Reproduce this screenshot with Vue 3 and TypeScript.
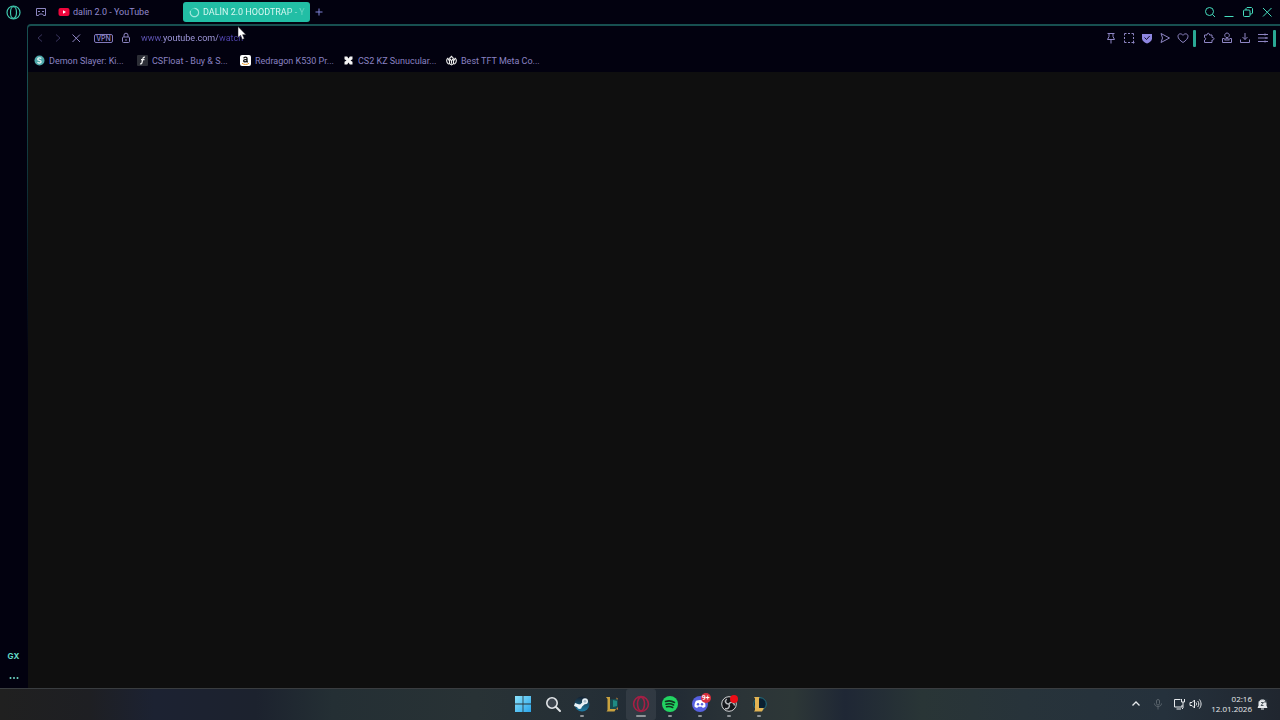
<script setup lang="ts">
import { ref } from 'vue'

interface Bookmark {
  id: string
  label: string
}

const bookmarks: Bookmark[] = [
  { id: 'slayer', label: 'Demon Slayer: Ki...' },
  { id: 'float', label: 'CSFloat - Buy & S...' },
  { id: 'amazon', label: 'Redragon K530 Pr...' },
  { id: 'kz', label: 'CS2 KZ Sunucular...' },
  { id: 'tft', label: 'Best TFT Meta Co...' },
]

interface Tool {
  name: string
  path: string
  bar?: boolean
  solid?: boolean
}

const tools: Tool[] = [
  { name: 'Pin', path: 'M2.500 1.500h7M4 1.500v3L2.500 7.500h7L8 4.500v-3M6 7.500v4' },
  { name: 'Snapshot', path: 'M1.500 3.500v-2h2M5 1.500h2M8.500 1.500h2v2M10.500 5v2M1.500 5v2M1.500 8.500v2h2M5 10.500h2M8.500 10.500h3M10.500 8.500v3' },
  { name: 'Ad blocker', path: 'M1 2h10v4.500C11 9 8.500 10.500 6 11.500 3.500 10.500 1 9 1 6.500z', solid: true },
  { name: 'Flow', path: 'M2 1.500L10.500 6 2 10.500 3.500 6z' },
  { name: 'Favourites', path: 'M6 10.500C3 8.500 1 6.500 1 4.300 1 1.500 4.500 1 6 3.300 7.500 1 11 1.500 11 4.300 11 6.500 9 8.500 6 10.500z', bar: true },
  { name: 'Extensions', path: 'M1.500 3h2.500c-.5-2.300 3-2.300 2.500 0H9v2.500c2.600-.5 2.600 3 0 2.500v2.500H1.500V8c1.600 0 1.600-2.500 0-2.500z' },
  { name: 'Profile', path: 'M6 1a2.300 2.300 0 1 0 .1 0M3.500 6.500h-2v4h9v-4h-2M3.500 8c1-2 4-2 5 0z' },
  { name: 'Downloads', path: 'M6 1v6.500M3.500 5L6 7.500 8.500 5M1.500 7.500v3h9v-3' },
  { name: 'Easy setup', path: 'M1 2.500h10M1 6h10M1 9.500h10M8 1.500v2M9 5v2M8 8.500v2', bar: true },
]

interface TaskItem {
  id: string
  label: string
  running: boolean
  active?: boolean
  badge?: string
}

const tasks: TaskItem[] = [
  { id: 'start', label: 'Start', running: false },
  { id: 'search', label: 'Search', running: false },
  { id: 'steam', label: 'Steam', running: true },
  { id: 'riot', label: 'League client', running: false },
  { id: 'opera', label: 'Opera GX', running: true, active: true },
  { id: 'spotify', label: 'Spotify', running: true },
  { id: 'discord', label: 'Discord', running: true, badge: '9+' },
  { id: 'obs', label: 'OBS Studio', running: true },
  { id: 'league', label: 'League of Legends', running: true },
]

const address = ref('www.youtube.com/watch')
</script>

<template>
  <div class="desktop">
    <div class="browser">
      <aside class="sidebar">
        <button class="opera" aria-label="Opera menu">
          <svg width="15" height="15" viewBox="0 0 15 15" fill="none" stroke="#3fc9ae">
            <circle cx="7.500" cy="7.500" r="6.500" stroke-width="1.200" />
            <ellipse cx="7.500" cy="7.500" rx="3" ry="5.800" stroke-width="1.200" />
          </svg>
        </button>
        <button class="gx">GX</button>
        <button class="more" aria-label="More">
          <svg width="10" height="4" viewBox="0 0 10 4" fill="#6fd9c8">
            <circle cx="1.500" cy="2" r="1" /><circle cx="5" cy="2" r="1" /><circle cx="8.500" cy="2" r="1" />
          </svg>
        </button>
      </aside>

      <div class="window">
        <header class="tabs">
          <button class="island" aria-label="Tab islands">
            <svg width="12" height="10" viewBox="0 0 12 10" fill="none" stroke="#8c86c0">
              <path d="M1.500 1.500h9v7H8.500L7.500 7h-3l-1 1.500h-2z" /><path d="M3 4.500h2M7 4.500h2" />
            </svg>
          </button>
          <button class="tab">
            <svg width="12" height="10" viewBox="0 0 12 10">
              <rect x="0.500" y="1" width="11" height="8" rx="2" fill="#f0063c" /><path d="M5 3.200v3.600L8 5z" fill="#fff" />
            </svg>
            <span>dalin 2.0 - YouTube</span>
          </button>
          <button class="tab current">
            <svg width="11" height="11" viewBox="0 0 11 11" fill="none">
              <circle cx="5.500" cy="5.500" r="4.200" stroke="#4fd2bc" />
              <path d="M5.500 1.300A4.200 4.200 0 1 1 1.500 4" stroke="#a0e8dc" stroke-width="1.200" />
            </svg>
            <span>DALİN 2.0 HOODTRAP - Y</span>
          </button>
          <button class="plus" aria-label="New tab">
            <svg width="8" height="8" viewBox="0 0 8 8" stroke="#7f83d8"><path d="M4 .5v7M.5 4h7" /></svg>
          </button>
          <div class="controls">
            <button aria-label="Search tabs">
              <svg width="12" height="12" viewBox="0 0 12 12"><circle cx="5.500" cy="5.500" r="4" /><path d="M8.500 8.500l2.500 2.500" /></svg>
            </button>
            <button aria-label="Minimize">
              <svg width="12" height="12" viewBox="0 0 12 12"><path d="M1.500 10.500h9" /></svg>
            </button>
            <button aria-label="Restore">
              <svg width="12" height="12" viewBox="0 0 12 12"><rect x="1.500" y="4" width="6.500" height="6.500" rx="1" /><path d="M4 4V2.500l1-1h4.500l1 1V7l-1 1H8" /></svg>
            </button>
            <button aria-label="Close">
              <svg width="12" height="12" viewBox="0 0 12 12"><path d="M2 2l8.500 8.500M10.500 2L2 10.500" /></svg>
            </button>
          </div>
        </header>

        <section class="panel">
          <div class="toolbar">
            <button class="nav dim" aria-label="Back">
              <svg width="12" height="12" viewBox="0 0 12 12"><path d="M8 2.500L4 6l4 3.500" /></svg>
            </button>
            <button class="nav dim" aria-label="Forward">
              <svg width="12" height="12" viewBox="0 0 12 12"><path d="M4 2.500L8 6 4 9.500" /></svg>
            </button>
            <button class="nav" aria-label="Stop loading">
              <svg width="12" height="12" viewBox="0 0 12 12"><path d="M2.500 2.500l7.500 7.500M10 2.500L2.500 10" /></svg>
            </button>
            <button class="vpn">VPN</button>
            <button class="lock" aria-label="Site information">
              <svg width="10" height="12" viewBox="0 0 10 12"><rect x="1.500" y="5" width="7" height="5.500" rx="1" /><path d="M3 5V3.200a2 2 0 0 1 4 0V5M5 7v2" /></svg>
            </button>
            <input v-model="address" class="address" type="text" aria-label="Address" spellcheck="false" />
            <div class="tools">
              <template v-for="tool in tools" :key="tool.name">
                <button :aria-label="tool.name">
                  <svg width="12" height="12" viewBox="0 0 12 12" :class="{ solid: tool.solid }">
                    <path :d="tool.path" />
                    <path v-if="tool.solid" class="tick" d="M3.500 5.500l2 2L8.700 4" />
                  </svg>
                </button>
                <i v-if="tool.bar" class="bar"></i>
              </template>
            </div>
          </div>

          <nav class="bookmarks">
            <a v-for="mark in bookmarks" :key="mark.id" href="#">
              <svg v-if="mark.id === 'slayer'" width="11" height="11" viewBox="0 0 11 11">
                <circle cx="5.500" cy="5.500" r="5" fill="#4fa9ac" />
                <path d="M7.300 3.500C6 2.300 3.500 2.800 3.800 4.300 4 5.700 7 5 7.100 6.700 7.100 8.300 4.600 8.400 3.500 7.300" fill="none" stroke="#e8f6f6" stroke-width="1.300" />
              </svg>
              <svg v-else-if="mark.id === 'float'" width="11" height="11" viewBox="0 0 11 11">
                <rect width="11" height="11" rx="1" fill="#2c2e36" />
                <path d="M8 2.300C6.500 1.800 6 3 5.700 4.500L5 7.500C4.700 8.700 4 9 3 8.700M4 4.700h3.500" fill="none" stroke="#f2f2f2" stroke-width="1.200" />
              </svg>
              <svg v-else-if="mark.id === 'amazon'" width="11" height="11" viewBox="0 0 11 11">
                <rect width="11" height="11" rx="2" fill="#fff" />
                <path d="M3.700 3.300C4 1.600 7 1.600 7 3.300v3.200l.6.800M7 4.300C4.500 4.200 3.500 4.900 3.700 6 4 7.400 6.300 7 7 5.700" fill="none" stroke="#111" stroke-width="1.300" />
                <path d="M2 8.300c2 1.600 5 1.600 7 0" fill="none" stroke="#f0a030" />
              </svg>
              <svg v-else-if="mark.id === 'kz'" width="11" height="11" viewBox="0 0 11 11">
                <path d="M1.500 1.500h2.700l1.300 2 1.300-2h2.700v2.700l-2 1.300 2 1.300v2.700H6.800l-1.300-2-1.300 2H1.500V6.800l2-1.300-2-1.300z" fill="#f4f4f4" />
              </svg>
              <svg v-else width="11" height="11" viewBox="0 0 12 11">
                <path d="M3 9.500C0 8 .3 4 2 3l2 3.500M9 9.500C12 8 11.700 4 10 3L8 6.500M4 3l2-2 2 2-2 3zM3.800 4v5L6 10.300 8.200 9V4M6 6v3" fill="none" stroke="#eee" stroke-width="1.200" />
              </svg>
              <span>{{ mark.label }}</span>
            </a>
          </nav>

          <main class="page"></main>
        </section>
      </div>
    </div>

    <footer class="taskbar">
      <div></div>
      <div class="apps">
        <button v-for="task in tasks" :key="task.id" :aria-label="task.label" :class="{ running: task.running, active: task.active }">
          <svg v-if="task.id === 'start'" width="18" height="18" viewBox="0 0 18 18">
            <defs><linearGradient id="win" x2="1" y2="1"><stop stop-color="#8be2fb" /><stop offset="1" stop-color="#2aa5ea" /></linearGradient></defs>
            <path d="M1 1h7.600v7.600H1zM9.400 1H17v7.600H9.400zM1 9.400h7.600V17H1zM9.400 9.400H17V17H9.400z" fill="url(#win)" />
          </svg>
          <svg v-else-if="task.id === 'search'" width="18" height="18" viewBox="0 0 18 18">
            <circle cx="8" cy="8" r="5.200" fill="#3d454e" stroke="#e2e5e8" stroke-width="1.600" />
            <path d="M12 12l4 4" stroke="#e2e5e8" stroke-width="2" stroke-linecap="round" />
          </svg>
          <svg v-else-if="task.id === 'steam'" width="18" height="18" viewBox="0 0 18 18">
            <defs><linearGradient id="stm" x2="0" y2="1"><stop stop-color="#16202e" /><stop offset="1" stop-color="#1d7fa8" /></linearGradient></defs>
            <circle cx="9" cy="9" r="7.500" fill="url(#stm)" />
            <path d="M1.500 9.500L7 11.500l5.500-5" stroke="#e9f2f7" stroke-width="3" fill="none" />
            <circle cx="12" cy="6.300" r="3" fill="#e9f2f7" /><circle cx="12" cy="6.300" r="1.400" fill="#a8bccb" />
            <circle cx="6.500" cy="11.800" r="2.300" fill="#e9f2f7" />
          </svg>
          <svg v-else-if="task.id === 'riot'" width="18" height="18" viewBox="0 0 18 18">
            <path d="M7 4.500l8-1v9l-4 3H7z" fill="#174b50" /><path d="M10 5l4 1v5l-4 1z" fill="#1f8b83" />
            <path d="M3 2h4v12h6l-1.500 2.500H3.500L4.500 15V4z" fill="#c9a23f" /><path d="M13 2.500l2 1-1 1.500zM13 14l2-2v3z" fill="#bd7a34" />
          </svg>
          <svg v-else-if="task.id === 'opera'" width="18" height="18" viewBox="0 0 18 18" fill="none" stroke="#a51f45">
            <circle cx="9" cy="9" r="7.400" stroke-width="1.600" /><ellipse cx="9" cy="9" rx="3.500" ry="6.800" stroke-width="1.600" />
          </svg>
          <svg v-else-if="task.id === 'spotify'" width="18" height="18" viewBox="0 0 18 18">
            <circle cx="9" cy="9" r="8" fill="#22d362" />
            <path d="M4.500 6.500c3-1 6.500-.6 9 1M5 9.200c2.700-.8 5.500-.5 7.600.8M5.500 11.800c2.200-.6 4.300-.4 6.200.7" fill="none" stroke="#10351f" stroke-width="1.500" stroke-linecap="round" />
          </svg>
          <svg v-else-if="task.id === 'discord'" width="18" height="18" viewBox="0 0 18 18">
            <circle cx="9" cy="9" r="8" fill="#5660df" />
            <path d="M5 5.800c2.500-1 5.500-1 8 0 1.200 2 1.700 4 1.400 6-.8.700-1.700 1-2.700 1.200l-.7-1.200H7l-.7 1.200c-1-.2-1.900-.5-2.700-1.200-.3-2 .2-4 1.400-6z" fill="#fff" />
            <circle cx="7" cy="9.200" r="1.200" fill="#5660df" /><circle cx="11" cy="9.200" r="1.200" fill="#5660df" />
          </svg>
          <svg v-else-if="task.id === 'obs'" width="18" height="18" viewBox="0 0 18 18">
            <circle cx="9" cy="9" r="7.300" fill="#14171b" stroke="#d2d4d6" />
            <path d="M9 9c-3.500.3-4.500-3-2.300-5M9 9c2-3 5.300-1.700 5.500 1.500M9 9c1.500 3-1 5.500-4 4.500" fill="none" stroke="#b5b8bb" stroke-width="1.500" />
            <circle cx="14" cy="4" r="4" fill="#ee0d16" />
          </svg>
          <svg v-else width="18" height="18" viewBox="0 0 18 18">
            <circle cx="10" cy="9" r="6.300" fill="#0b2030" stroke="#227083" />
            <path d="M4 2h5.500L9 3.500v9.500h5l-2 3.500H4l1-1.500V3.500z" fill="#e2b453" />
          </svg>
          <span v-if="task.badge" class="badge">{{ task.badge }}</span>
        </button>
      </div>
      <div class="tray">
        <button aria-label="Hidden icons"><svg width="10" height="10" viewBox="0 0 10 10"><path d="M1.500 6.500L5 3l3.500 3.500" stroke-width="1.300" /></svg></button>
        <button class="mic" aria-label="Microphone"><svg width="10" height="12" viewBox="0 0 10 12"><rect x="3.500" y="1.500" width="3" height="5.500" rx="1.500" /><path d="M1.500 5.500c0 4 7 4 7 0M5 8.500v3" /></svg></button>
        <button class="sound" aria-label="Network and sound">
          <svg width="12" height="12" viewBox="0 0 12 12"><path d="M7.500 1.500h-6v7.500h7.500V7M3.500 11h4.500M10 5v5l-1 1M8.500 1v3h3V1M10 4v1" /></svg>
          <svg width="13" height="12" viewBox="0 0 13 12"><path d="M1 4.500h2L5.500 2v8L3 7.500H1zM7 4.500c.7.800.7 2.200 0 3M8.700 3c1.500 1.700 1.500 4.300 0 6M10.400 1.500c2.200 2.500 2.200 6.500 0 9" /></svg>
        </button>
        <time datetime="2026-01-12T02:16"><span>02:16</span><span>12.01.2026</span></time>
        <button aria-label="Notifications"><svg width="11" height="12" viewBox="0 0 11 12"><path d="M1 9.500L2 8V4.500C2 1 9 1 9 4.500V8l1 1.500z" fill="#e6e9ec" /><path d="M4 11h3" /><path d="M4 4.500h2.500L4 7.500h2.500M7.500 1.500h3l-3 2.500h3" stroke="#27313a" stroke-width=".8" /></svg></button>
      </div>
    </footer>

    <svg class="pointer" width="10" height="15" viewBox="0 0 10 15"><path d="M1 .5v11l2.600-2.200L5.300 13.500l2-.9-1.700-3.900H9z" fill="#fff" stroke="#15151d" stroke-width=".5" /></svg>
  </div>
</template>

<style>
body {
  background: #0f0f0f;
}
</style>

<style scoped>
.desktop {
  position: relative;
  display: flex;
  flex-direction: column;
  height: 100vh;
  overflow: hidden;
  font-family: Roboto, "Liberation Sans", sans-serif;
  font-size: 9px;
  line-height: 12px;
}
button {
  display: flex;
  align-items: center;
  justify-content: center;
  padding: 0;
  border: 0;
  background: none;
  color: inherit;
  font: inherit;
}
svg {
  flex: none;
}
.browser {
  display: flex;
  flex: 1;
  min-height: 0;
  background: #02010f;
  color: #9189cc;
}
.sidebar {
  display: flex;
  flex-direction: column;
  align-items: center;
  width: 27px;
  padding-bottom: 4px;
}
.opera {
  height: 25px;
  margin-bottom: auto;
}
.gx {
  height: 22px;
  color: #62dcc8;
  font-family: Inter, sans-serif;
  font-size: 8px;
  font-weight: 700;
}
.more {
  height: 12px;
  margin-top: 5px;
}
.window {
  display: flex;
  flex: 1;
  flex-direction: column;
  min-width: 0;
}
.tabs {
  display: flex;
  align-items: center;
  height: 24px;
  padding: 0 7px 0 8px;
}
.island {
  margin-right: 11px;
}
.tab {
  justify-content: flex-start;
  gap: 3px;
  width: 125px;
  height: 20px;
  white-space: nowrap;
}
.tab.current {
  gap: 3px;
  width: 127px;
  padding: 0 2px 0 6px;
  border-radius: 3px;
  background: #22bea5;
  color: #d6f7f1;
}
.tab.current span {
  flex: 1;
  min-width: 0;
  text-align: left;
  mask-image: linear-gradient(90deg, #000 80%, #0003 98%);
}
.plus {
  width: 17px;
  height: 20px;
}
.controls {
  display: flex;
  gap: 7px;
  margin-left: auto;
}
.controls svg {
  fill: none;
  stroke: #45dcbd;
}
.panel {
  display: flex;
  flex: 1;
  flex-direction: column;
  padding: 2px 0 0 1px;
  border-top-left-radius: 4px;
  background: linear-gradient(#174f50 0, #174f50 8%, #02010f 50%);
}
.toolbar {
  display: flex;
  align-items: center;
  height: 24px;
  padding: 0 4px 0 6px;
  border-top-left-radius: 3px;
  background: #02010f;
}
.toolbar svg {
  fill: none;
  stroke: #8e86c4;
}
.toolbar .dim svg {
  stroke: #39345d;
}
.nav {
  width: 12px;
  margin-right: 6px;
}
.vpn {
  width: 19px;
  height: 9px;
  margin: 0 8px 0 6px;
  border: 1px solid #8178bb;
  border-radius: 2px;
  font-family: Inter, sans-serif;
  font-size: 7px;
  font-weight: 500;
  line-height: 7px;
}
.address {
  flex: 1;
  min-width: 0;
  margin-left: 10px;
  padding: 0;
  border: 0;
  outline: 0;
  background: linear-gradient(90deg, #5f54b4 22px, #a8a0e6 22px, #a8a0e6 77px, #5044ae 77px);
  background-clip: text;
  color: #a8a0e6;
  -webkit-text-fill-color: transparent;
  font: inherit;
}
.tools {
  display: flex;
  align-items: center;
  gap: 6px;
}
.tools .solid {
  fill: #8e86e0;
  stroke: none;
}
.tools .tick {
  fill: none;
  stroke: #100d30;
}
.bar {
  width: 3px;
  height: 17px;
  margin: 0 1px 0 -2px;
  border-radius: 1px;
  background: #2aa995;
}
.bar:last-child {
  margin-right: 0;
}
.bookmarks {
  display: flex;
  align-items: center;
  height: 22px;
  padding: 0 0 1px 6px;
  box-sizing: border-box;
  background: #02010f;
}
.bookmarks a {
  display: flex;
  align-items: center;
  gap: 4px;
  width: 103px;
  color: #8a82c2;
  text-decoration: none;
  white-space: nowrap;
}
.page {
  flex: 1;
  background: #0f0f0f;
}
.taskbar {
  display: grid;
  grid-template-columns: 1fr auto 1fr;
  height: 31px;
  padding-left: 2px;
  border-top: 1px solid #3a3d40;
  background: linear-gradient(90deg, #202020 0, #1e1f23 7%, #1c2232 12%, #1c222e 20%, #242f34 26%, #283235 37%, #252f36 46%, #212a34 52%, #2b3437 58%, #2d3737 62%, #1f2735 66%, #293536 72%, #27333a 80%, #25313c 91%, #20262f 100%);
}
.apps {
  display: grid;
  grid-template-columns: repeat(9, 1fr);
  width: 265px;
}
.apps button {
  position: relative;
  padding-bottom: 1px;
}
.apps .active {
  border-radius: 3px;
  background: #ffffff12;
}
.running::after {
  position: absolute;
  bottom: 3px;
  left: 50%;
  width: 4px;
  height: 2px;
  margin-left: -2px;
  border-radius: 1px;
  background: #8f9499;
  content: "";
}
.running.active::after {
  width: 10px;
  margin-left: -5px;
}
.badge {
  position: absolute;
  top: 4px;
  right: 4px;
  width: 10px;
  height: 10px;
  border-radius: 5px;
  background: #d9303e;
  color: #fff;
  font-size: 7px;
  font-weight: 600;
  line-height: 10px;
}
.tray {
  display: flex;
  align-items: center;
  justify-content: flex-end;
  padding: 0 12px 2px 0;
  color: #e8ebee;
}
.tray svg {
  fill: none;
  stroke: #e6e9ec;
}
.tray .mic {
  margin: 0 10px 0 12px;
}
.tray .mic svg {
  stroke: #59636b;
}
.sound {
  gap: 4px;
}
time {
  display: flex;
  flex-direction: column;
  margin: 0 5px 0 9px;
  font-family: "Open Sans", "Noto Sans", sans-serif;
  font-size: 8px;
  line-height: 10px;
  text-align: right;
}
.pointer {
  position: absolute;
  top: 26px;
  left: 237px;
}
</style>
